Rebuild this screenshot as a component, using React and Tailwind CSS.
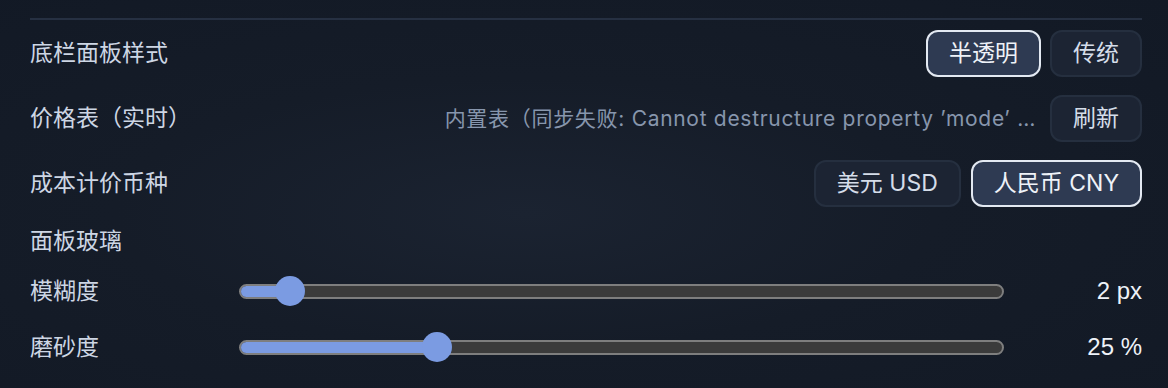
import React from 'react';

const cjk = "font-['Inter','Noto_Sans_CJK_SC',sans-serif]";

const Option = ({ active, children }) => (
    <button
        className={
            active
                ? "h-[47px] px-[21px] rounded-xl border-2 border-[#e3e9f2] bg-[#2e3a52] text-[#eef2f8] text-[23px]"
                : "h-[47px] px-[21px] rounded-xl border-2 border-[#252f3f] bg-[#1c2433] text-[#d5dde9] text-[23px]"
        }
    >
        {children}
    </button>
);

const Slider = ({ pct }) => (
    <div className="relative flex-1 h-[30px] flex items-center">
        <div className="relative w-full h-[15px] rounded-full border-2 border-[#7e7e7e] bg-[#3b3b3b] overflow-hidden">
            <div className="h-full bg-[#7b9be2]" style={{ width: `${pct}%` }} />
        </div>
        <div
            className="absolute top-0 w-[30px] h-[30px] -ml-[15px] rounded-full bg-[#7b9be2]"
            style={{ left: `${pct}%` }}
        />
    </div>
);

export default function App() {
    return (
        <div className={`w-[1168px] h-[388px] overflow-hidden bg-[radial-gradient(ellipse_at_45%_55%,#1b2331_0%,#151c28_45%,#121925_100%)] ${cjk}`}>
            <div className="pl-[30px] pr-[26px] pt-[18px]">
                <div className="border-t-2 border-[#263042]" />

                <div className="mt-[10px] flex flex-col gap-[18px]">
                    <div className="flex items-center justify-between">
                        <span className="text-[23px] text-[#cdd6e4]">底栏面板样式</span>
                        <div className="flex gap-[9px]">
                            <Option active>半透明</Option>
                            <Option>传统</Option>
                        </div>
                    </div>

                    <div className="flex items-center justify-between gap-4">
                        <span className="text-[23px] text-[#cdd6e4] shrink-0">价格表（实时）</span>
                        <div className="flex items-center gap-[14px]">
                            <span className="whitespace-nowrap text-[21px] tracking-[0.7px] text-[#8796ad]">
                                内置表（同步失败: Cannot destructure property ’mode’ …
                            </span>
                            <Option>刷新</Option>
                        </div>
                    </div>

                    <div className="flex items-center justify-between">
                        <span className="text-[23px] text-[#cdd6e4]">成本计价币种</span>
                        <div className="flex gap-[10px]">
                            <Option>美元 USD</Option>
                            <Option active>人民币 CNY</Option>
                        </div>
                    </div>
                </div>

                <div className="mt-[20px] h-[28px] flex items-center text-[23px] text-[#cdd6e4]">面板玻璃</div>

                <div className="mt-[16px] flex flex-col gap-[16px]">
                    <div className="h-[40px] flex items-center">
                        <span className="w-[209px] text-[23px] text-[#cdd6e4]">模糊度</span>
                        <Slider pct={6.7} />
                        <span className="w-[138px] text-right text-[24px] text-[#eef2f8] font-['Liberation_Sans',sans-serif]">2 px</span>
                    </div>
                    <div className="h-[40px] flex items-center">
                        <span className="w-[209px] text-[23px] text-[#cdd6e4]">磨砂度</span>
                        <Slider pct={25.9} />
                        <span className="w-[138px] text-right text-[24px] text-[#eef2f8] font-['Liberation_Sans',sans-serif]">25 %</span>
                    </div>
                </div>
            </div>
        </div>
    );
}
